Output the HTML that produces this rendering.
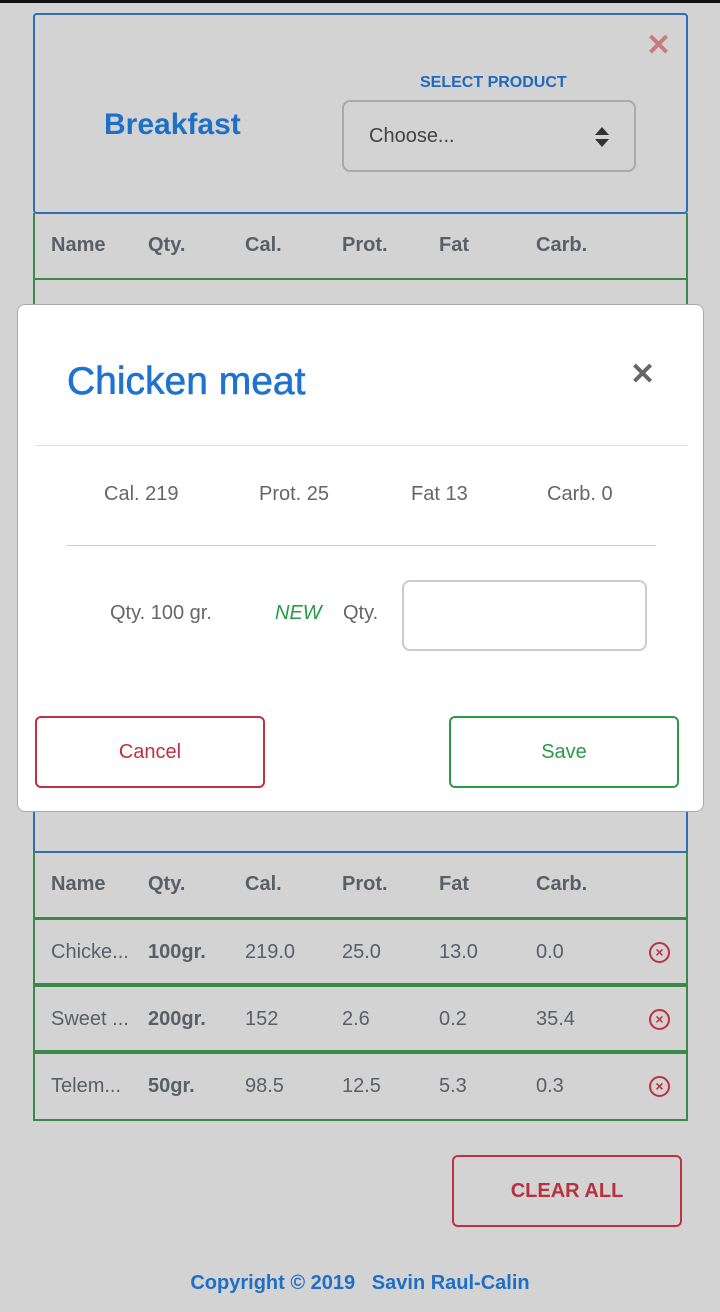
<!DOCTYPE html>
<html><head><style>
*{box-sizing:border-box;margin:0;padding:0}
body{width:720px;height:1312px;background:#d3d3d3;font-family:"Liberation Sans",sans-serif;position:relative;overflow:hidden}
.abs{position:absolute}
.card{left:33px;width:655px;border:2px solid #2f6db5;border-radius:4px}
.row{position:absolute;left:33px;width:655px;border:2px solid #3a8a47;border-top:none;height:67px;font-size:20px;color:#5a5f66}
.row span{position:absolute;top:21px}
.hd span{font-weight:bold}
.x{position:absolute;right:16px;top:22px;width:21px;height:21px;border:2px solid #c0303d;border-radius:50%;color:#c0303d;font-size:14px;text-align:center;line-height:16px;font-weight:bold}
</style></head><body>
<div class="abs" style="left:0;top:0;width:720px;height:3px;background:#111"></div>
<div class="abs card" style="top:13px;height:201px;border-bottom:2px solid #2f6db5"></div>
<div class="abs" style="left:646px;top:28px;font-size:30px;color:#c77b7b;font-weight:bold">✕</div>
<div class="abs" style="left:420px;top:74px;font-size:16px;font-weight:bold;color:#2069c0">SELECT PRODUCT</div>
<div class="abs" style="left:104px;top:108px;font-size:30px;font-weight:bold;color:#1e6fc6">Breakfast</div>
<div class="abs" style="left:342px;top:100px;width:294px;height:72px;border:2px solid #a9a9a9;border-radius:8px;font-size:20px;color:#444;padding:23px 0 0 25px">Choose...
<svg class="abs" style="right:24px;top:24px" width="16" height="22"><path d="M8 1L15 9H1Z M8 21L15 13H1Z" fill="#333"/></svg></div>
<div class="row hd" style="top:213px;border-top:none"><span style="left:16px">Name</span><span style="left:113px">Qty.</span><span style="left:210px">Cal.</span><span style="left:307px">Prot.</span><span style="left:404px">Fat</span><span style="left:501px">Carb.</span></div>
<div class="row" style="top:280px;height:40px;border-bottom:none"></div>
<div class="abs" style="left:33px;top:800px;width:655px;height:53px;border:2px solid #2f6db5;border-top:none"></div>
<div class="row hd" style="top:852px"><span style="left:16px">Name</span><span style="left:113px">Qty.</span><span style="left:210px">Cal.</span><span style="left:307px">Prot.</span><span style="left:404px">Fat</span><span style="left:501px">Carb.</span></div>
<div class="row" style="top:918px;border-top:2px solid #3a8a47"><span style="left:16px">Chicke...</span><span style="left:113px;font-weight:bold">100gr.</span><span style="left:210px">219.0</span><span style="left:307px">25.0</span><span style="left:404px">13.0</span><span style="left:501px">0.0</span><div class="x">×</div></div>
<div class="row" style="top:985px;border-top:2px solid #3a8a47"><span style="left:16px">Sweet ...</span><span style="left:113px;font-weight:bold">200gr.</span><span style="left:210px">152</span><span style="left:307px">2.6</span><span style="left:404px">0.2</span><span style="left:501px">35.4</span><div class="x">×</div></div>
<div class="row" style="top:1052px;border-top:2px solid #3a8a47;height:69px"><span style="left:16px">Telem...</span><span style="left:113px;font-weight:bold">50gr.</span><span style="left:210px">98.5</span><span style="left:307px">12.5</span><span style="left:404px">5.3</span><span style="left:501px">0.3</span><div class="x">×</div></div>
<div class="abs" style="left:452px;top:1155px;width:230px;height:72px;border:2px solid #c0303d;border-radius:6px;color:#b8323d;font-weight:bold;font-size:20px;text-align:center;line-height:68px">CLEAR ALL</div>
<div class="abs" style="left:0;width:720px;top:1272px;text-align:center;font-size:20px;font-weight:bold;color:#1e6fc6">Copyright © 2019 &nbsp; Savin Raul-Calin</div>

<div class="abs" style="left:17px;top:304px;width:687px;height:508px;background:#fff;border:1px solid #aaa;border-radius:8px">
<div class="abs" style="left:49px;top:55px;font-size:39px;color:#1e73cf;-webkit-text-stroke:0.6px #1e73cf">Chicken meat</div>
<div class="abs" style="left:612px;top:52px;font-size:30px;color:#666;font-weight:bold">✕</div>
<div class="abs" style="left:17px;top:140px;width:652px;border-top:1px solid #ddd"></div>
<div class="abs" style="top:178px;left:0;width:687px;font-size:20px;color:#666">
<span class="abs" style="left:86px">Cal. 219</span><span class="abs" style="left:241px">Prot. 25</span><span class="abs" style="left:393px">Fat 13</span><span class="abs" style="left:529px">Carb. 0</span></div>
<div class="abs" style="left:48px;top:240px;width:590px;border-top:1px solid #ccc"></div>
<div class="abs" style="left:92px;top:297px;font-size:20px;color:#666">Qty. 100 gr.</div>
<div class="abs" style="left:257px;top:297px;font-size:20px;color:#2a9a45;font-style:italic">NEW</div>
<div class="abs" style="left:325px;top:297px;font-size:20px;color:#666">Qty.</div>
<div class="abs" style="left:384px;top:275px;width:245px;height:71px;border:2px solid #ccc;border-radius:8px"></div>
<div class="abs" style="left:17px;top:411px;width:230px;height:72px;border:2px solid #c0303d;border-radius:6px;color:#c0303d;font-size:20px;text-align:center;line-height:68px">Cancel</div>
<div class="abs" style="left:431px;top:411px;width:230px;height:72px;border:2px solid #2a9a45;border-radius:6px;color:#2a9a45;font-size:20px;text-align:center;line-height:68px">Save</div>
</div>
</body></html>
